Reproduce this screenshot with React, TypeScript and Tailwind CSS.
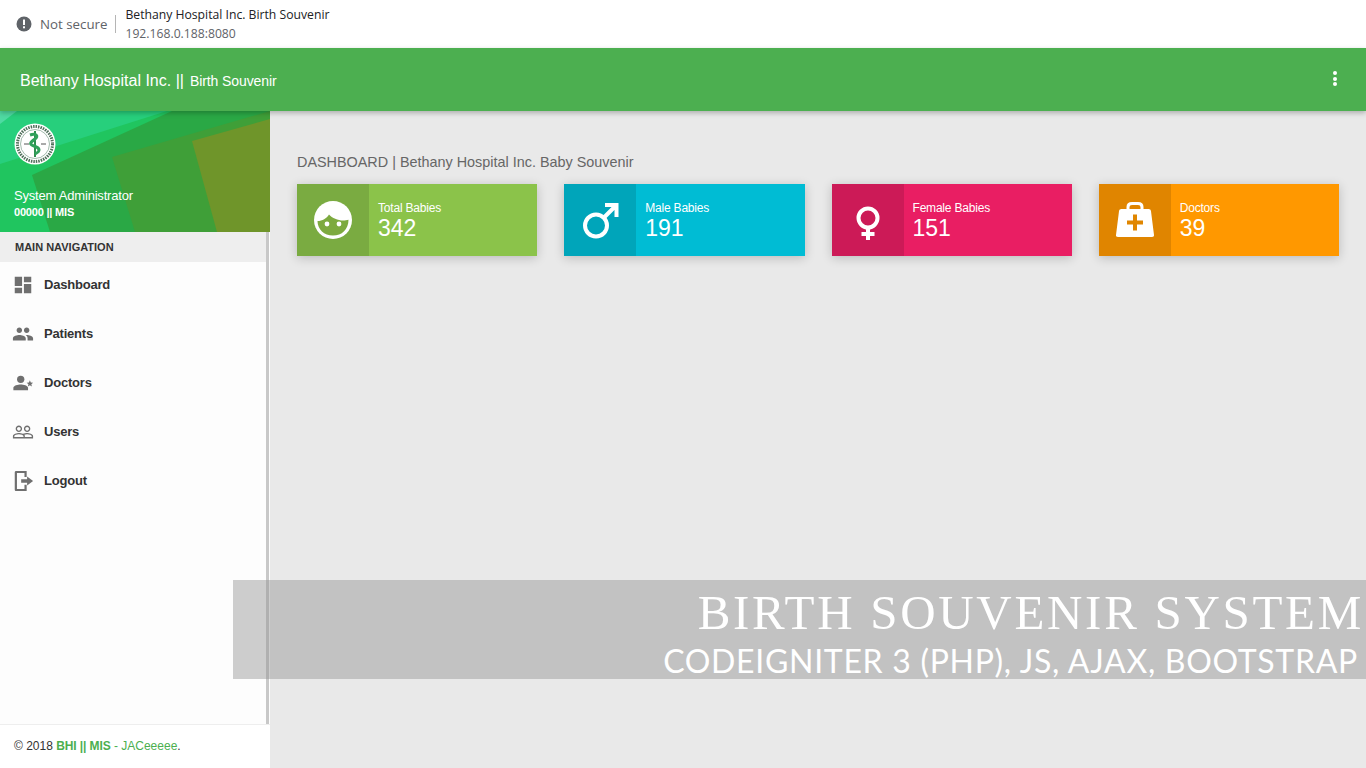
const arial = { fontFamily: '"Liberation Sans", Arial, sans-serif' };

function DashboardIcon() {
  return (
    <svg viewBox="0 0 24 24" className="w-[22px] h-[22px] fill-[#6f6f6f]">
      <path d="M3 13h8V3H3v10zm0 8h8v-6H3v6zm10 0h8V11h-8v10zm0-18v6h8V3h-8z" />
    </svg>
  );
}

function PeopleIcon() {
  return (
    <svg viewBox="0 0 24 24" className="w-[22px] h-[22px] fill-[#6f6f6f]">
      <path d="M16 11c1.66 0 2.99-1.34 2.99-3S17.66 5 16 5c-1.66 0-3 1.34-3 3s1.34 3 3 3zm-8 0c1.66 0 2.99-1.34 2.99-3S9.66 5 8 5C6.34 5 5 6.34 5 8s1.34 3 3 3zm0 2c-2.33 0-7 1.17-7 3.5V19h14v-2.5c0-2.33-4.67-3.5-7-3.5zm8 0c-.29 0-.62.02-.97.05 1.16.84 1.97 1.97 1.97 3.45V19h6v-2.5c0-2.33-4.67-3.5-7-3.5z" />
    </svg>
  );
}

function DoctorIcon() {
  return (
    <svg viewBox="0 0 24 24" className="w-[22px] h-[22px] fill-[#6f6f6f]">
      <circle cx="9.5" cy="8" r="4" />
      <path d="M9.5 13.5c-3 0-8 1.3-8 3.7V20h16v-2.8c0-2.4-5-3.700-8-3.700z" />
      <path d="M19.500 9l1 2.400 2.500.2-1.900 1.700.6 2.500-2.200-1.300-2.200 1.300.6-2.500-1.900-1.700 2.500-.2z" />
    </svg>
  );
}

function UsersIcon() {
  return (
    <svg viewBox="0 0 24 24" className="w-[22px] h-[22px] fill-[#6f6f6f]">
      <path d="M16.5 13c-1.2 0-3.07.34-4.5 1-1.43-.67-3.3-1-4.5-1C5.33 13 1 14.08 1 16.25V19h22v-2.75c0-2.17-4.33-3.25-6.5-3.25zm-4 4.5h-10v-1.25c0-.54 2.56-1.75 5-1.75s5 1.21 5 1.75v1.25zm9 0H14v-1.25c0-.46-.2-.86-.52-1.22.88-.3 1.96-.53 3.02-.53 2.44 0 5 1.21 5 1.75v1.25zM7.5 12c1.93 0 3.5-1.57 3.5-3.5S9.43 5 7.5 5 4 6.57 4 8.5 5.57 12 7.5 12zm0-5.5c1.1 0 2 .9 2 2s-.9 2-2 2-2-.9-2-2 .9-2 2-2zm9 5.5c1.93 0 3.5-1.57 3.5-3.5S18.43 5 16.5 5 13 6.57 13 8.5s1.57 3.5 3.5 3.5zm0-5.5c1.1 0 2 .9 2 2s-.9 2-2 2-2-.9-2-2 .9-2 2-2z" />
    </svg>
  );
}

function LogoutIcon() {
  return (
    <svg viewBox="0 0 24 24" className="w-[22px] h-[22px] fill-[#6f6f6f]">
      <path d="M4.500 1h11.500v6.500h-2.400V3.400H5.400v17.200h8.200v-4.600H16V23H4.500C3.600 23 3 22.400 3 21.500v-19C3 1.600 3.600 1 4.500 1z" />
      <path d="M10 10h6.500V7l6.500 5-6.500 5v-3H10z" />
    </svg>
  );
}

function FaceIcon() {
  return (
    <svg viewBox="0 0 40 40" className="w-[40px] h-[40px]">
      <circle cx="20" cy="20" r="19" className="fill-white" />
      <path d="M4.500 21c5 0 9-2.500 11.500-6.500 3 3.500 9 6 14 6 2 0 4-.3 5.500-.8C35.500 29.500 28.800 35.500 20 35.500S4.500 29.500 4.500 21z" className="fill-[#7daa3f]" />
      <circle cx="14" cy="24" r="2.400" className="fill-white" />
      <circle cx="26" cy="24" r="2.400" className="fill-white" />
    </svg>
  );
}

function MaleIcon() {
  return (
    <svg viewBox="0 0 40 40" className="w-[40px] h-[40px] fill-none stroke-white stroke-[4]">
      <circle cx="16" cy="25.500" r="11" />
      <path d="M24 17.500L37 4.500M25 5h11.500v12" />
    </svg>
  );
}

function FemaleIcon() {
  return (
    <svg viewBox="0 0 40 40" className="w-[40px] h-[40px] fill-none stroke-white stroke-[4]">
      <circle cx="20" cy="18" r="9.500" />
      <path d="M20 27.500V40M13.500 34h13" />
    </svg>
  );
}

function BagIcon() {
  return (
    <svg viewBox="0 0 40 40" className="w-[40px] h-[40px]">
      <path d="M13 10V7c0-2.500 1.500-3.500 4-3.500h6c2.500 0 4 1 4 3.500v3" className="fill-none stroke-white stroke-[3]" />
      <path d="M6.500 9h27c1.500 0 2.300.8 2.500 2.300l3 23.700c.2 1.300-.6 2-2 2H3c-1.400 0-2.200-.7-2-2l3-23.700C4.200 9.800 5 9 6.500 9z" className="fill-white" />
      <path d="M18 14.500h4v6h6v4h-6v6h-4v-6h-6v-4h6z" className="fill-[#e08600]" />
    </svg>
  );
}

const navItems = [
  { icon: DashboardIcon, label: 'Dashboard' },
  { icon: PeopleIcon, label: 'Patients' },
  { icon: DoctorIcon, label: 'Doctors' },
  { icon: UsersIcon, label: 'Users' },
  { icon: LogoutIcon, label: 'Logout' },
];

const cards = [
  { icon: FaceIcon, title: 'Total Babies', value: '342', bg: 'bg-[#8bc34a]' },
  { icon: MaleIcon, title: 'Male Babies', value: '191', bg: 'bg-[#00bcd4]' },
  { icon: FemaleIcon, title: 'Female Babies', value: '151', bg: 'bg-[#e91e63]' },
  { icon: BagIcon, title: 'Doctors', value: '39', bg: 'bg-[#ff9800]' },
];

export default function App() {
  return (
    <div className="relative flex h-screen flex-col overflow-hidden bg-[#e9e9e9]" style={arial}>
      {/* browser address bar */}
      <div className="flex h-[48px] shrink-0 items-center bg-white pl-[16px] font-['Open_Sans',sans-serif]">
        <svg viewBox="0 0 16 16" className="h-[16px] w-[16px]">
          <circle cx="8" cy="8" r="7.500" className="fill-[#5f6368]" />
          <rect x="7" y="3.500" width="2" height="5.500" className="fill-white" />
          <rect x="7" y="10.300" width="2" height="2" className="fill-white" />
        </svg>
        <span className="ml-[8px] mt-[1px] text-[13.300px] text-[#5f6368]">Not secure</span>
        <div className="ml-[8px] h-[18px] w-px bg-[#b5b5b5]" />
        <div className="ml-[9px] flex flex-col gap-[3px] text-[12.200px] leading-[16px]">
          <span className="text-[#202124]">Bethany Hospital Inc. Birth Souvenir</span>
          <span className="text-[#5f6368]">192.168.0.188:8080</span>
        </div>
      </div>

      {/* app bar */}
      <div className="relative z-10 flex h-[63px] shrink-0 items-center justify-between bg-[#4caf50] pl-[20px] pr-[29px] text-white shadow-[0_2px_5px_rgba(0,0,0,0.26)]">
        <div className="mt-[3px] flex items-baseline">
          <span className="text-[16px]">Bethany Hospital Inc. ||</span>
          <span className="ml-[6px] text-[14px] tracking-[-0.100px]">Birth Souvenir</span>
        </div>
        <div className="mb-[2px] flex flex-col gap-[1.500px]">
          <div className="h-[4px] w-[4px] rounded-full bg-white" />
          <div className="h-[4px] w-[4px] rounded-full bg-white" />
          <div className="h-[4px] w-[4px] rounded-full bg-white" />
        </div>
      </div>

      <div className="flex min-h-0 flex-1">
        {/* sidebar */}
        <aside className="flex w-[270px] shrink-0 flex-col bg-[#fdfdfd]">
          <div className="relative h-[121px] shrink-0 overflow-hidden bg-[#20c55f] px-[14px] pt-[12px] text-white">
            <svg viewBox="0 0 270 121" className="absolute inset-0 h-full w-full">
              <polygon points="0,53 167,0 0,0" className="fill-[#27cf7c]" />
              <polygon points="0,13 17,0 0,0" className="fill-[#4fdaa2]" />
              <polygon points="32,64 172,0 270,0 270,121 50,121" className="fill-[#2aa845]" />
              <polygon points="112,46 270,0 270,121 135,121" className="fill-[#3f9f38]" />
              <polygon points="192,30 270,8 270,121 217,121" className="fill-[#6f952a]" />
            </svg>
            <div className="relative flex h-[42px] w-[42px] items-center justify-center">
              <svg viewBox="0 0 42 42" className="h-[42px] w-[42px]">
                <circle cx="21" cy="21" r="20.500" className="fill-white" />
                <circle cx="21" cy="21" r="17.500" className="fill-none stroke-[#4f6f5a] stroke-[3] [stroke-dasharray:1.500_1]" />
                <circle cx="21" cy="21" r="14.500" className="fill-white stroke-[#47795a] stroke-[0.500]" />
                <path d="M21 8v26" className="fill-none stroke-[#2f8f4f] stroke-[2]" />
                <path d="M16 12c6-2 9 1 5 4s-7 5-1 7 7 5 1 8" className="fill-none stroke-[#2fa05a] stroke-[3]" />
                <path d="M10 21h5M27 21h5" className="fill-none stroke-[#555] stroke-[1]" />
              </svg>
            </div>
            <div className="relative mt-[21px] text-[13px] leading-[20px] tracking-[-0.200px]">System Administrator</div>
            <div className="relative mt-[-3px] text-[11px] font-bold leading-[18px] tracking-[-0.200px]">00000 || MIS</div>
          </div>

          <div className="flex min-h-0 flex-1">
            <div className="min-w-0 flex-1">
              <div className="flex h-[30px] items-center bg-[#eeeeee] pl-[15px] text-[11px] font-bold text-[#333]">
                MAIN NAVIGATION
              </div>
              {navItems.map((item) => (
                <div key={item.label} className="flex h-[49px] items-center pb-[4px] pl-[12px]">
                  <item.icon />
                  <span className="ml-[10px] text-[13px] font-bold tracking-[-0.200px] text-[#333]">{item.label}</span>
                </div>
              ))}
            </div>
            <div className="mr-px w-[3px] bg-[#c8c8c8]" />
          </div>

          <div className="flex h-[44px] shrink-0 items-center border-t border-[#eeeeee] bg-white pb-[2px] pl-[14px] text-[12px] text-[#333]">
            <span>© 2018&nbsp;</span>
            <span className="font-bold tracking-[-0.100px] text-[#4caf50]">BHI || MIS</span>
            <span className="text-[#4caf50]">&nbsp;- JACeeeee</span>
            <span>.</span>
          </div>
        </aside>

        {/* main content */}
        <main className="min-w-0 flex-1 px-[27px] pt-[43px]">
          <h2 className="text-[14.400px] leading-[17px] text-[#666]">DASHBOARD | Bethany Hospital Inc. Baby Souvenir</h2>
          <div className="mt-[13px] grid grid-cols-4 gap-[27px]">
            {cards.map((card) => (
              <div key={card.title} className={`flex h-[72px] text-white shadow-[0_2px_10px_rgba(0,0,0,0.2)] ${card.bg}`}>
                <div className="flex w-[72px] shrink-0 items-center justify-center bg-black/12">
                  <card.icon />
                </div>
                <div className="pl-[9px] pt-[17px]">
                  <div className="text-[12px] leading-[14px] tracking-[-0.200px]">{card.title}</div>
                  <div className="text-[23px] leading-[26px]">{card.value}</div>
                </div>
              </div>
            ))}
          </div>
        </main>
      </div>

      {/* caption strip over the page */}
      <div className="absolute bottom-[89px] left-[233px] right-0 flex h-[99px] flex-col items-end bg-[#929292]/45 text-white">
        <div className="mr-[2px] font-['Liberation_Serif',serif] text-[49px] leading-[66px] tracking-[2.700px]">BIRTH SOUVENIR SYSTEM</div>
        <div className="mr-[8px] font-['Lato',sans-serif] text-[32px] leading-[29px] tracking-[0.700px]">CODEIGNITER 3 (PHP), JS, AJAX, BOOTSTRAP</div>
      </div>
    </div>
  );
}
